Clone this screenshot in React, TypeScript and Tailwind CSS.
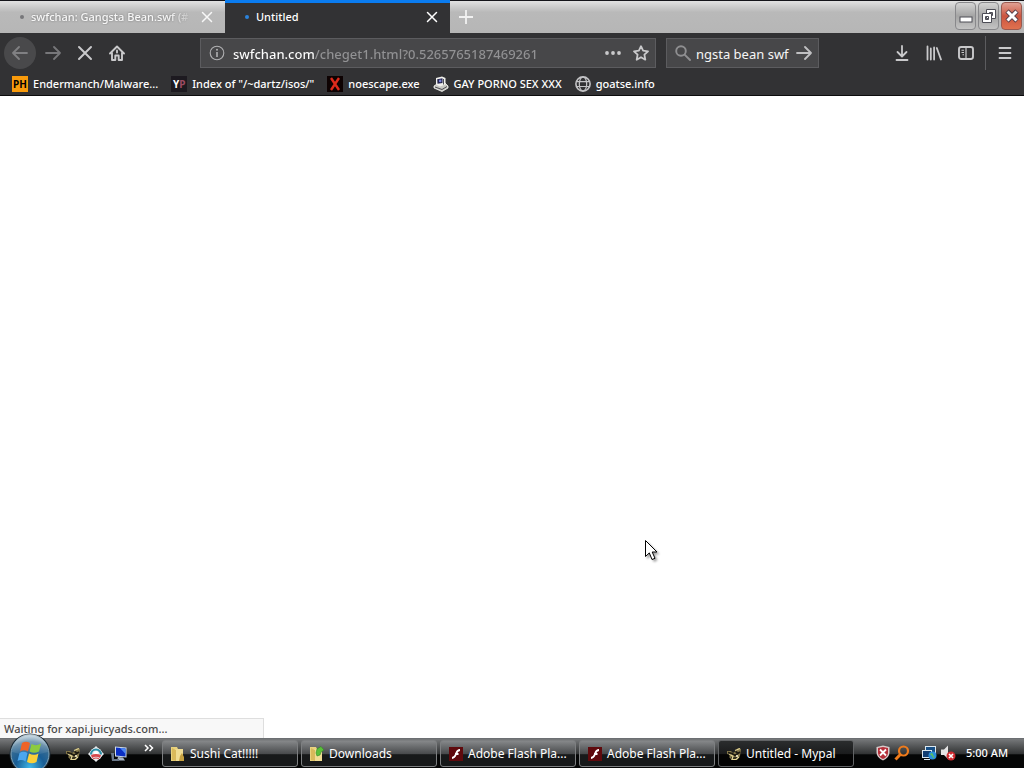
import React from 'react';
import { clsx } from 'clsx';

interface IconProps {
  className?: string;
}

const CloseIcon: React.FC<IconProps> = ({ className }) => (
  <svg viewBox="0 0 16 16" className={className} fill="none" stroke="currentColor" strokeWidth="2" strokeLinecap="round">
    <path d="M2 2L14 14M14 2L2 14" />
  </svg>
);

const ArrowIcon: React.FC<IconProps> = ({ className }) => (
  <svg viewBox="0 0 16 16" className={className} fill="none" stroke="currentColor" strokeWidth="1.8" strokeLinecap="round" strokeLinejoin="round">
    <path d="M1 8H15M9 2L15 8L9 14" />
  </svg>
);

const HomeIcon: React.FC = () => (
  <svg viewBox="0 0 16 16" className="h-4 w-4" fill="none" stroke="currentColor" strokeWidth="1.9" strokeLinecap="round" strokeLinejoin="round">
    <path d="M1 8.5L8 1.5L15 8.5M3 8V15H6.3V10.5H9.7V15H13V8" />
    <path d="M8 5.5V7.5" />
  </svg>
);

const InfoIcon: React.FC = () => (
  <svg viewBox="0 0 16 16" className="h-4 w-4 shrink-0 text-[#b1b1b3]" fill="none" stroke="currentColor" strokeWidth="1.1">
    <circle cx="8" cy="8" r="6.8" />
    <path d="M8 7V12" strokeWidth="1.6" />
    <circle cx="8" cy="4.7" r="1" fill="currentColor" stroke="none" />
  </svg>
);

const StarIcon: React.FC = () => (
  <svg viewBox="0 0 16 16" className="h-4 w-4" fill="none" stroke="currentColor" strokeWidth="1.8" strokeLinejoin="round">
    <path d="M8 1.2L10.1 5.7L15 6.3L11.4 9.7L12.3 14.7L8 12.2L3.7 14.7L4.6 9.7L1 6.3L5.9 5.7Z" />
  </svg>
);

const SearchIcon: React.FC = () => (
  <svg viewBox="0 0 16 16" className="h-4 w-4 shrink-0 text-[#8f8f91]" fill="none" stroke="currentColor" strokeWidth="1.9" strokeLinecap="round">
    <circle cx="6" cy="6" r="4.8" />
    <path d="M9.6 9.6L15 15" />
  </svg>
);

const DownloadIcon: React.FC = () => (
  <svg viewBox="0 0 16 16" className="h-4 w-4" fill="none" stroke="currentColor" strokeWidth="1.8" strokeLinecap="round" strokeLinejoin="round">
    <path d="M8 1V11M3.5 7L8 11.5L12.5 7M2.5 15H13.5" />
  </svg>
);

const LibraryIcon: React.FC = () => (
  <svg viewBox="0 0 16 16" className="h-4 w-4" fill="none" stroke="currentColor" strokeWidth="1.8" strokeLinecap="round">
    <path d="M1.5 1.5V14.5M4.8 3.5V14.5M8.1 2.5V14.5M10.8 3L15 14.5" />
  </svg>
);

const SidebarIcon: React.FC = () => (
  <svg viewBox="0 0 16 16" className="h-4 w-4" fill="none" stroke="currentColor" strokeWidth="1.9">
    <rect x="1" y="2" width="14" height="12" rx="2.2" />
    <path d="M8 2V14" strokeWidth="1.2" />
    <path d="M3.5 5.2H6M3.5 7.5H6M4.5 9.8H6" strokeWidth="1.1" />
  </svg>
);

const MenuIcon: React.FC = () => (
  <svg viewBox="0 0 16 16" className="h-4 w-4" fill="none" stroke="currentColor" strokeWidth="1.8" strokeLinecap="round">
    <path d="M2.5 3H13.5M2.5 8H13.5M2.5 13H13.5" />
  </svg>
);

const ComputerIcon: React.FC = () => (
  <svg viewBox="0 0 16 16" className="h-4 w-4">
    <path d="M1 10L4 8L12 7L15 10V12L9 15.5L1 12Z" fill="#c9c9c4" stroke="#f4f4f0" strokeWidth="0.8" />
    <path d="M3 2L9 0.5L12.5 2V8.5L7 10.5L3 8.5Z" fill="#f0f0ec" />
    <path d="M4.2 3.2L9.5 2.3V7L4.5 7.8Z" fill="#23234c" />
    <circle cx="7.2" cy="4.9" r="1.3" fill="#7782d8" />
    <path d="M2 11L9 13.5L14 10.5M10.5 3V8.5" stroke="#3b3b42" strokeWidth="0.9" fill="none" />
  </svg>
);

const GlobeIcon: React.FC = () => (
  <svg viewBox="0 0 16 16" className="h-4 w-4" fill="none" stroke="#c4c4c6" strokeWidth="1.2">
    <circle cx="8" cy="8" r="7.1" strokeWidth="1.6" />
    <ellipse cx="8" cy="8" rx="3.7" ry="7" />
    <path d="M1 5.7H15M1 10.5H15" />
  </svg>
);

const MypalIcon: React.FC = () => (
  <svg viewBox="0 0 16 16" className="h-4 w-4">
    <path d="M1 5L5 5L7 7L10 5L12 2L15 3L14 10L11 14H6L3 11L5 9L1 8Z" fill="#85784a" />
    <path d="M2 6.5L6 7.5L9 9.5L14 6M5 12L11 12M9.5 5.5L12 7" stroke="#1d1a12" strokeWidth="1.7" fill="none" />
    <path d="M9 4.5L14 2.5M3 8.5L7 10L6 13.5L10 13.5L13 11" stroke="#e3d595" strokeWidth="1.2" fill="none" />
    <circle cx="11" cy="10" r="1.1" fill="#f4edcb" />
  </svg>
);

const KMeleonIcon: React.FC = () => (
  <svg viewBox="0 0 16 16" className="h-4 w-4">
    <path d="M8 0L16 8L8 16L0 8Z" fill="#e9edf0" />
    <circle cx="8" cy="8" r="6.2" fill="#e9edf0" />
    <path d="M3 8.5A5 5 0 1 1 13 8.5" fill="none" stroke="#2c8fa8" strokeWidth="2.2" />
    <circle cx="8" cy="7" r="2" fill="#fff" />
    <path d="M3 9Q8 7 13 9L12 12Q8 9.5 4 12Z" fill="#d8474b" />
    <path d="M5 13Q8 11 11 13" stroke="#d8474b" strokeWidth="1.2" fill="none" />
  </svg>
);

const DesktopIcon: React.FC = () => (
  <svg viewBox="0 0 16 16" className="h-4 w-4">
    <path d="M4 0.5L15.5 1.5V11.5L4 10.5Z" fill="#cfdbea" />
    <path d="M5 1.5L14.5 2.5V10.5L5 9.5Z" fill="#0b2fc4" />
    <path d="M9 2L14.5 2.5V8Z" fill="#4b87f3" />
    <path d="M7 11L12 11.5L14 14.5H6Z" fill="#a8b5c7" />
    <path d="M0 7H3V13H8V15H1Z" fill="#6a7889" />
  </svg>
);

const FolderIcon: React.FC<{ arrow?: boolean }> = ({ arrow }) => (
  <svg viewBox="0 0 16 16" className="h-4 w-4 shrink-0">
    <path d="M1 1H7L8 3V15H1Z" fill="#e9d27d" />
    <path d="M4 3H13V15H4Z" fill="#f0dc93" />
    <path d="M2 2L6 4V15L2 14Z" fill="#d9b95b" />
    {arrow ? (
      <path d="M7 7L8 3L12 0.5L15 4L12 6L11 9L8 10Z" fill="#5cbf3a" stroke="#2f8b25" strokeWidth="0.6" />
    ) : (
      <path d="M10 10L12 7L14 11V15H9Z" fill="#c7a141" />
    )}
  </svg>
);

const FlashIcon: React.FC = () => (
  <svg viewBox="0 0 16 16" className="h-4 w-4 shrink-0">
    <rect x="1" y="1" width="14" height="14" fill="#5f0a0d" />
    <path d="M12 4C9 4 8.8 6 8 8S6.5 12 4 12M7 8H10.5" fill="none" stroke="#fff" strokeWidth="1.8" />
  </svg>
);

const StartOrb: React.FC = () => (
  <svg viewBox="0 0 44 44" className="h-11 w-11">
    <defs>
      <radialGradient id="orb" cx="0.5" cy="0.85" r="0.85">
        <stop offset="0" stopColor="#3fb6e8" />
        <stop offset="0.45" stopColor="#195d94" />
        <stop offset="0.8" stopColor="#3c6e92" />
        <stop offset="1" stopColor="#a4bfce" />
      </radialGradient>
      <linearGradient id="shine" x1="0" y1="0" x2="0" y2="1">
        <stop offset="0" stopColor="#fff" stopOpacity="0.5" />
        <stop offset="1" stopColor="#fff" stopOpacity="0.05" />
      </linearGradient>
    </defs>
    <circle cx="22" cy="21" r="20.5" fill="#1b2a35" />
    <circle cx="22" cy="21" r="19" fill="url(#orb)" stroke="#7fa3b8" strokeWidth="1" />
    <path d="M4 19A18 18 0 0 1 40 19Q22 25 4 19Z" fill="url(#shine)" />
    <path d="M14 10Q18 7.5 22 10L20 18.5Q16 16 12 18.5Z" fill="#ee6328" />
    <path d="M23.5 11Q28 13.5 33 10.5L31 18.5Q26 21 21.5 18.5Z" fill="#8ccb3f" />
    <path d="M11.5 20Q15.5 17.5 19.5 20L17.5 28.5Q13.5 26 9.5 28Z" fill="#4ba6ee" />
    <path d="M21 20.5Q26 23 30.5 20.5L28.5 29Q24 31.5 19 29Z" fill="#fbd039" />
  </svg>
);

const ShieldIcon: React.FC = () => (
  <svg viewBox="0 0 16 16" className="h-4 w-4">
    <path d="M8 0.5L14.5 2V8Q14 13 8 15.5Q2 13 1.5 8V2Z" fill="#d9cccc" />
    <path d="M8 2L13 3V8Q12.5 12 8 14Q3.5 12 3 8V3Z" fill="#b5303a" />
    <path d="M5 4.5L11 10.5M11 4.5L5 10.5" stroke="#fff" strokeWidth="1.8" />
  </svg>
);

const TrayLensIcon: React.FC = () => (
  <svg viewBox="0 0 16 16" className="h-4 w-4" fill="none" stroke="#ee7b1c">
    <circle cx="9.5" cy="6" r="4.5" strokeWidth="2.2" />
    <path d="M6.3 9.5L1.5 14.5" strokeWidth="3" />
  </svg>
);

const NetworkIcon: React.FC = () => (
  <svg viewBox="0 0 16 16" className="h-4 w-4">
    <rect x="4.5" y="1.5" width="10" height="7" fill="#174f86" stroke="#dce8f0" />
    <rect x="1.5" y="5.5" width="9" height="7" fill="#123e72" stroke="#dce8f0" />
    <path d="M3 14.5H9" stroke="#dce8f0" />
    <circle cx="11.5" cy="10.5" r="4" fill="#2b8edb" />
    <path d="M9 9.5Q11 6.5 12 9.5T14 11.5L12 13.5Q12 10.5 9 9.5Z" fill="#5bc25a" />
  </svg>
);

const VolumeIcon: React.FC = () => (
  <svg viewBox="0 0 16 16" className="h-4 w-4">
    <path d="M1 4.5H4L8 0.5V14L4 10H1Z" fill="#e4e4e4" />
    <circle cx="11" cy="11" r="4.5" fill="#cf2c31" />
    <path d="M9 9L13 13M13 9L9 13" stroke="#fff" strokeWidth="1.6" />
  </svg>
);

const tabs = [
  { title: 'swfchan: Gangsta Bean.swf (#', active: false },
  { title: 'Untitled', active: true },
];

const bookmarks = [
  {
    label: 'Endermanch/Malware...',
    icon: <span className="flex h-4 w-4 items-center justify-center bg-[#f99b0c] text-[10px] font-bold text-black">PH</span>,
  },
  {
    label: 'Index of "/~dartz/isos/"',
    icon: (
      <span className="flex h-4 w-4 items-center justify-center bg-[#1d1a20] text-[10px] font-bold text-white">
        Y<span className="text-[#9c4a62]">P</span>
      </span>
    ),
  },
  {
    label: 'noescape.exe',
    icon: (
      <svg viewBox="0 0 16 16" className="h-4 w-4">
        <rect width="16" height="16" fill="#0d0202" />
        <path d="M4 2L12 14M12 2L4 14" stroke="#dd2a1b" strokeWidth="2.4" />
      </svg>
    ),
  },
  { label: 'GAY PORNO SEX XXX', icon: <ComputerIcon /> },
  { label: 'goatse.info', icon: <GlobeIcon /> },
];

const tasks = [
  { label: 'Sushi Cat!!!!!', icon: <FolderIcon />, active: false },
  { label: 'Downloads', icon: <FolderIcon arrow />, active: false },
  { label: 'Adobe Flash Pla...', icon: <FlashIcon />, active: false },
  { label: 'Adobe Flash Pla...', icon: <FlashIcon />, active: false },
  { label: 'Untitled - Mypal', icon: <MypalIcon />, active: true },
];

const ToolButton: React.FC<{ label: string; className?: string; children: React.ReactNode }> = ({ label, className, children }) => (
  <button aria-label={label} className={clsx('flex h-8 w-8 shrink-0 items-center justify-center', className || 'text-[#c9c9cb]')}>
    {children}
  </button>
);

const TabStrip: React.FC = () => (
  <div className="flex h-[33px] border-t border-[#15151a] bg-linear-to-b from-[#e2e2e2] via-[#b9b9b9] via-35% to-[#b6b6b6] text-[11px] font-medium">
    {tabs.map((tab) => (
      <div
        key={tab.title}
        className={clsx(
          'flex w-[225px] items-center pr-2',
          tab.active ? '-mt-px border-t-3 border-[#0a7cf0] bg-[#323234] pb-[2px] text-white' : 'text-[#f7f7f7]'
        )}
      >
        <span className={clsx('ml-5 h-1 w-1 shrink-0 rounded-full', tab.active ? 'bg-[#2b83dc]' : 'bg-[#77777a]')} />
        <button
          className={clsx(
            'ml-[7px] flex-1 text-left whitespace-nowrap',
            !tab.active && 'mask-r-from-85% mask-r-to-100% drop-shadow-[0_0_1px_#777]'
          )}
        >
          {tab.title}
        </button>
        <button aria-label="Close tab" className="ml-1 p-1">
          <CloseIcon className="h-3 w-3" />
        </button>
      </div>
    ))}
    <button aria-label="New tab" className="flex w-8 items-center justify-center text-[#f1f1f1]">
      <svg viewBox="0 0 16 16" className="h-4 w-4" fill="none" stroke="currentColor" strokeWidth="1.8">
        <path d="M8 1V15M1 8H15" />
      </svg>
    </button>
    <div className="ml-auto flex gap-[2px] pt-px pr-[2px]">
      <button aria-label="Minimize" className="flex h-7 w-[21px] items-center justify-center rounded-sm border border-[#88888b] bg-linear-to-b from-[#d4d4d4] via-[#a4a4a4] to-[#c4c4c4]">
        <svg viewBox="0 0 16 16" className="h-4 w-4">
          <rect x="2" y="9" width="12" height="5" fill="#fff" stroke="#4c4c55" />
        </svg>
      </button>
      <button aria-label="Restore" className="flex h-7 w-[21px] items-center justify-center rounded-sm border border-[#88888b] bg-linear-to-b from-[#d4d4d4] via-[#a4a4a4] to-[#c4c4c4]">
        <svg viewBox="0 0 16 16" className="h-4 w-4" fillRule="evenodd" fill="#fff" stroke="#4c4c55">
          <path d="M5.5 1.5H14.5V10.5H5.5ZM8.5 4.5V7.5H11.5V4.5Z" />
          <path d="M1.5 5.5H10.5V14.5H1.5ZM4.5 8.5V11.5H7.5V8.5Z" />
        </svg>
      </button>
      <button aria-label="Close window" className="flex h-7 w-[21px] items-center justify-center rounded-sm border border-[#9a5a50] bg-linear-to-b from-[#dfa093] via-[#cb5540] to-[#e0714f]">
        <svg viewBox="0 0 16 16" className="h-4 w-4 shrink-0">
          <path d="M3 3L13 13M13 3L3 13" stroke="#59404a" strokeWidth="4.8" />
          <path d="M3.5 3.5L12.5 12.5M12.5 3.5L3.5 12.5" stroke="#fff" strokeWidth="3" />
        </svg>
      </button>
    </div>
  </div>
);

const NavBar: React.FC = () => (
  <div className="flex h-10 items-center pr-[3px] pl-1">
    <ToolButton label="Back" className="mr-px rounded-full bg-[#49494b] text-[#808083]">
      <ArrowIcon className="h-4 w-4 rotate-180" />
    </ToolButton>
    <ToolButton label="Forward" className="text-[#77777a]">
      <ArrowIcon className="h-4 w-4" />
    </ToolButton>
    <ToolButton label="Stop">
      <CloseIcon className="h-4 w-4" />
    </ToolButton>
    <ToolButton label="Home">
      <HomeIcon />
    </ToolButton>
    <div className="w-[67px]" />
    <div className="flex h-[30px] min-w-0 flex-1 items-center border border-[#5c5c5f] bg-[#474749] px-2">
      <InfoIcon />
      <input
        aria-label="Address"
        defaultValue="swfchan.com/cheget1.html?0.5265765187469261"
        className="ml-2 min-w-0 flex-1 bg-[linear-gradient(to_right,#fff_82px,#929294_82px)] bg-clip-text pt-px text-[13px] font-medium text-transparent outline-none"
      />
      <button aria-label="Page actions" className="mr-[6px] flex h-6 w-6 items-center justify-center text-[#c9c9cb]">
        <svg viewBox="0 0 16 16" className="h-4 w-4" fill="currentColor">
          <circle cx="2" cy="8" r="1.9" />
          <circle cx="8" cy="8" r="1.9" />
          <circle cx="14" cy="8" r="1.9" />
        </svg>
      </button>
      <button aria-label="Bookmark this page" className="-mr-1 p-[2px] text-[#c9c9cb]">
        <StarIcon />
      </button>
    </div>
    <div className="ml-[10px] flex h-[30px] w-[153px] items-center border border-[#5c5c5f] bg-[#474749] pr-[6px] pl-2">
      <SearchIcon />
      <input
        aria-label="Search"
        defaultValue="ngsta bean swf"
        className="ml-[5px] min-w-0 flex-1 bg-transparent pt-px text-[13px] text-[#f5f5f5] outline-none"
      />
      <button aria-label="Go" className="text-[#c0c0c2]">
        <ArrowIcon className="h-4 w-4" />
      </button>
    </div>
    <div className="w-[67px]" />
    <ToolButton label="Downloads">
      <DownloadIcon />
    </ToolButton>
    <ToolButton label="Library">
      <LibraryIcon />
    </ToolButton>
    <ToolButton label="Sidebars">
      <SidebarIcon />
    </ToolButton>
    <div className="mx-[3px] h-[34px] w-px bg-[#5c5c5f]" />
    <ToolButton label="Open menu">
      <MenuIcon />
    </ToolButton>
  </div>
);

const BookmarksBar: React.FC = () => (
  <nav className="flex h-[23px] items-center gap-[13px] border-b border-[#0c0c0d] pl-3 text-[11px] font-medium text-white">
    {bookmarks.map((bookmark) => (
      <a key={bookmark.label} href="#" className="flex items-center gap-[5px] whitespace-nowrap">
        {bookmark.icon}
        {bookmark.label}
      </a>
    ))}
  </nav>
);

const Taskbar: React.FC = () => (
  <footer className="relative flex h-[30px] items-center border-t border-[#6c6f72] bg-linear-to-b from-[#77797b] via-[#333536] via-50% to-[#050606] to-55% text-white">
    <button aria-label="Start" className="absolute -top-[6px] left-2 h-[35px] overflow-hidden">
      <StartOrb />
    </button>
    <div className="ml-[65px] flex w-[97px] items-center gap-[7px]">
      <button aria-label="Mypal"><MypalIcon /></button>
      <button aria-label="K-Meleon"><KMeleonIcon /></button>
      <button aria-label="Show desktop"><DesktopIcon /></button>
      <button aria-label="More shortcuts" className="ml-[10px] pb-3">
        <svg viewBox="0 0 10 8" className="h-2 w-[10px]" fill="none" stroke="#fff" strokeWidth="1.5">
          <path d="M1 1L4 4L1 7M5.5 1L8.5 4L5.5 7" />
        </svg>
      </button>
    </div>
    <div className="flex min-w-0 gap-[3px]">
      {tasks.map((task, index) => (
        <button
          key={index}
          className={clsx(
            'flex h-[27px] w-[136px] items-center gap-1 overflow-hidden rounded-[3px] border px-[7px] whitespace-nowrap',
            task.active
              ? 'border-[#626466] bg-linear-to-b from-[#2b2d2e] via-[#1b1c1d] via-50% to-[#040404] to-55% pt-px'
              : 'border-[#7d7f81] bg-linear-to-b from-[#86888a] via-[#4a4c4e] via-50% to-[#17191a] to-55%'
          )}
        >
          {task.icon}
          {task.label}
        </button>
      ))}
    </div>
    <div className="ml-auto flex items-center pr-4 pb-[2px]">
      <ShieldIcon />
      <span className="ml-[3px]"><TrayLensIcon /></span>
      <span className="ml-[11px]"><NetworkIcon /></span>
      <span className="ml-[3px]"><VolumeIcon /></span>
      <time className="ml-[10px] text-[11px] font-medium">5:00 AM</time>
    </div>
  </footer>
);

const App: React.FC = () => {
  return (
    <div className="flex h-screen flex-col overflow-hidden bg-white font-['Noto_Sans','Open_Sans',sans-serif] text-[12px] leading-4">
      {/* Browser chrome */}
      <header className="bg-[#323234]">
        <TabStrip />
        <NavBar />
        <BookmarksBar />
      </header>

      {/* Page */}
      <main className="relative flex flex-1 flex-col justify-end">
        <svg viewBox="0 0 16 24" className="absolute top-[444px] left-[645px] h-6 w-4 drop-shadow-[2px_2px_1px_rgba(0,0,0,0.35)]">
          <path d="M0.5 0.5V16.5L4.3 12.9L7 19.5L10 18.3L7.2 12H12Z" fill="#fff" stroke="#000" />
        </svg>
        <div role="status" className="h-5 w-[264px] border-t border-r border-[#dedede] bg-[#f8f8f8] px-1 pt-[2px] text-[11px] font-medium text-[#4a4a4a]">
          Waiting for xapi.juicyads.com...
        </div>
      </main>

      <Taskbar />
    </div>
  );
};

export default App;
